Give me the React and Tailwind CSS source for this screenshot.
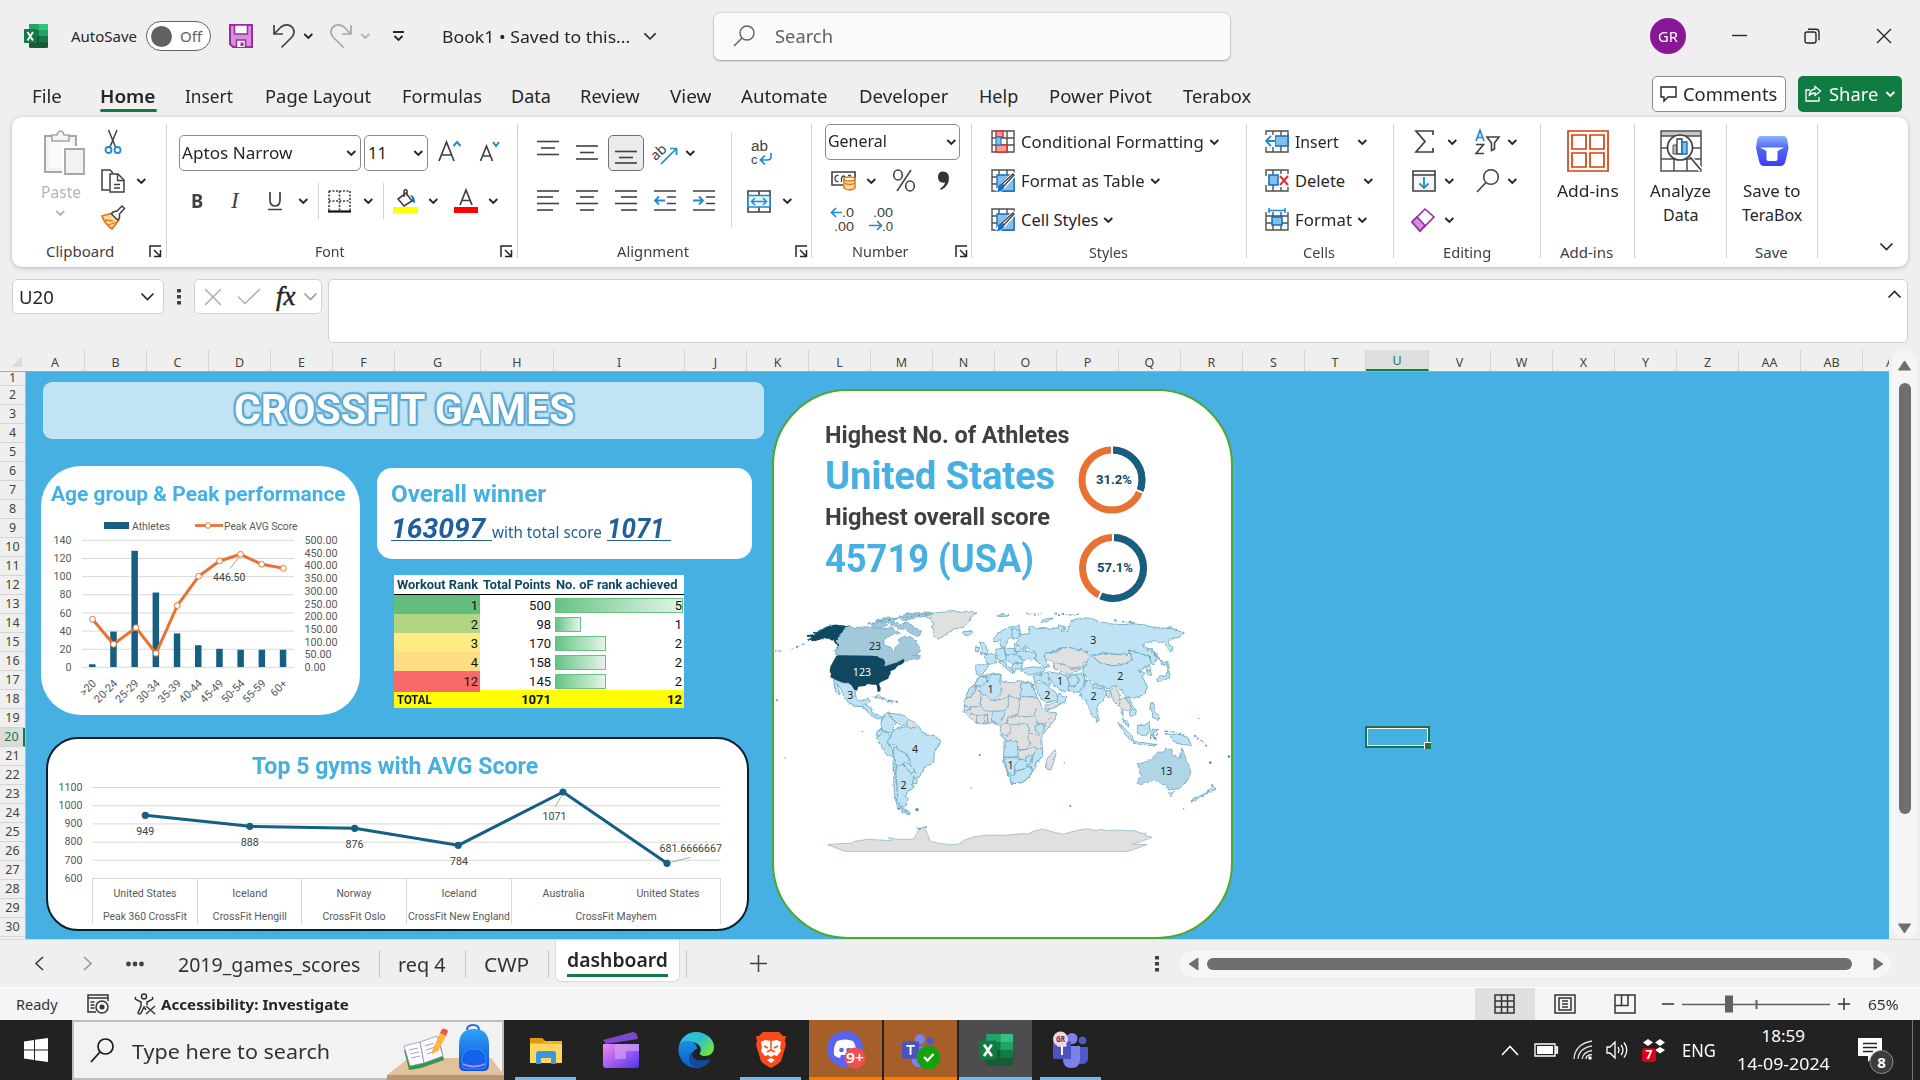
import React, { useLayoutEffect, useRef, useState } from "react";

/* Text set to a fixed measure, condensed or widened to fill it. */
function Fit({ w, className = "", children }) {
  const ref = useRef(null);
  const [k, setK] = useState(1);
  useLayoutEffect(() => {
    setK(w / ref.current.offsetWidth);
  }, [w]);
  return (
    <span className={"inline-flex shrink-0 " + className} style={{ width: w }}>
      <span ref={ref} className="inline-block origin-left whitespace-pre" style={{ transform: `scaleX(${k})` }}>
        {children}
      </span>
    </span>
  );
}

const Svg = ({ w, h, vb, className = "", children }) => (
  <svg width={w} height={h} viewBox={vb || `0 0 ${w} ${h}`} fill="none" className={"block shrink-0 overflow-visible " + className}>
    {children}
  </svg>
);

const Chev = ({ className = "", c = "#262626", w = 10, s = 1.9 }) => (
  <Svg w={w} h={w * 0.6} vb="0.7 0 10 6" className={className}>
    <path d="M1 1 5 5 9 1" stroke={c} strokeWidth={s * (10 / w)} />
  </Svg>
);

const ExcelLogo = ({ s }) => (
  <Svg w={s} h={s} vb="0 0 24 24">
    <rect x="5" y="0" width="19" height="24" rx="1.2" fill="#185c37" />
    <path d="M6 0h9v6H5V1q0-1 1-1z" fill="#21a366" />
    <path d="M15 0h8q1 0 1 1v5h-9z" fill="#33c481" />
    <path d="M5 6h10v6H5z" fill="#107c41" />
    <path d="M15 6h9v6h-9z" fill="#21a366" />
    <path d="M15 12h9v6h-9z" fill="#107c41" />
    <rect x="0" y="5" width="12.500" height="14" rx="1" fill="#107c41" />
    <path d="M3.500 8 9 16.500M9 8 3.500 16.500" stroke="#fff" strokeWidth="1.900" />
  </Svg>
);

function TitleBar() {
  return (
    <div className="flex h-[72px] items-center pl-6 text-[#262626]">
      <ExcelLogo s={24} />
      <Fit w={66} className="ml-[23px] text-[15px]">AutoSave</Fit>
      <div className="ml-[9px] flex h-[30px] w-[65px] shrink-0 items-center rounded-full border border-[#616161] bg-white pl-1">
        <span className="h-[21px] w-[21px] rounded-full bg-[#616161]" />
        <Fit w={22} className="ml-2 text-[15px] text-[#616161]">Off</Fit>
      </div>
      <Svg w={24} h={24} className="ml-[18px]">
        <path d="M1 1h22v22H4l-3-3z" fill="#d58fdc" stroke="#9a2ba0" strokeWidth="2" />
        <path d="M5.500 1h13v9h-13zM7.500 23v-7h9v7" fill="#fafafa" stroke="#9a2ba0" strokeWidth="1.500" />
        <path d="M11.500 18.500h3V22h-3z" fill="#9a2ba0" />
      </Svg>
      <Svg w={22} h={24} className="ml-5">
        <path d="M1 1v9h9M1.500 9.500 8 3C11.500 0 17 0 19.500 3.500 22 7 21 10.500 19 13L8.500 23.500" stroke="#404040" strokeWidth="1.700" />
      </Svg>
      <Chev className="ml-[9px]" />
      <Svg w={22} h={24} className="ml-4">
        <path d="M21 1v9h-9M20.500 9.500 14 3C10.500 0 5 0 2.500 3.500 0 7 1 10.500 3 13l10.500 10.500" stroke="#a6a6a6" strokeWidth="1.700" />
      </Svg>
      <Chev className="ml-[9px]" c="#b4b4b4" />
      <Svg w={11} h={10} className="ml-[22px]">
        <path d="M0 1h11M1.500 5l4 4 4-4" stroke="#262626" strokeWidth="1.800" />
      </Svg>
      <Fit w={188} className="ml-[38px] pt-px text-[17px]">Book1 • Saved to this...</Fit>
      <Chev className="ml-[14px]" w={14} s={1.6} />
      <div className="ml-[56px] flex h-[47px] w-[516px] shrink-0 items-center rounded-md bg-[#fafafa] shadow-[0_0_2px_#b0b0b0,0_1px_2px_#a0a0a0]">
        <Svg w={22} h={22} className="ml-[19px]">
          <circle cx="14" cy="8" r="7" stroke="#616161" strokeWidth="1.400" />
          <path d="M9 13 1 21" stroke="#616161" strokeWidth="1.500" />
        </Svg>
        <Fit w={58} className="ml-[20px] pt-px text-[18px] text-[#616161]">Search</Fit>
      </div>
      <div className="ml-[420px] flex h-9 w-9 shrink-0 items-center justify-center rounded-full bg-[#881798] text-white">
        <Fit w={20} className="text-[14px]">GR</Fit>
      </div>
      <Svg w={16} h={16} className="ml-[46px]"><path d="M0 7.500h15" stroke="#262626" strokeWidth="1.400" /></Svg>
      <Svg w={16} h={16} className="ml-[56px]">
        <rect x="1" y="4" width="11" height="11" rx="2" stroke="#262626" strokeWidth="1.400" />
        <path d="M4 1.200h8q3 0 3 3v8" stroke="#262626" strokeWidth="1.400" />
      </Svg>
      <Svg w={16} h={16} className="ml-[56px]"><path d="M1 1l14 14M15 1 1 15" stroke="#262626" strokeWidth="1.400" /></Svg>
    </div>
  );
}

function MenuTabs() {
  const f = "text-[18px]";
  return (
    <div className="flex h-[45px] items-center pt-[3px] pl-8 text-[#262626]">
      <Fit w={30} className={f}>File</Fit>
      <div className="relative ml-[38px] flex">
        <Fit w={56} className="text-[18px] font-semibold">Home</Fit>
        <span className="absolute -bottom-[2px] left-0 h-[3px] w-[57px] rounded bg-[#107c41]" />
      </div>
      <Fit w={48} className={f + " ml-[29px]"}>Insert</Fit>
      <Fit w={106} className={f + " ml-[32px]"}>Page Layout</Fit>
      <Fit w={80} className={f + " ml-[31px]"}>Formulas</Fit>
      <Fit w={40} className={f + " ml-[29px]"}>Data</Fit>
      <Fit w={60} className={f + " ml-[29px]"}>Review</Fit>
      <Fit w={41} className={f + " ml-[30px]"}>View</Fit>
      <Fit w={87} className={f + " ml-[30px]"}>Automate</Fit>
      <Fit w={89} className={f + " ml-[31px]"}>Developer</Fit>
      <Fit w={39} className={f + " ml-[31px]"}>Help</Fit>
      <Fit w={103} className={f + " ml-[31px]"}>Power Pivot</Fit>
      <Fit w={68} className={f + " ml-[31px]"}>Terabox</Fit>
      <div className="-mt-[5px] ml-[401px] flex h-9 w-[134px] shrink-0 items-center rounded-[5px] border border-[#8a8a8a] bg-white">
        <Svg w={17} h={16} className="ml-[7px]">
          <path d="M1 1h15v10H8l-4 4v-4H1z" stroke="#262626" strokeWidth="1.400" />
        </Svg>
        <Fit w={94} className={f + " ml-[6px] pt-[2px]"}>Comments</Fit>
      </div>
      <div className="-mt-[5px] ml-3 flex h-9 w-[104px] shrink-0 items-center rounded-[5px] bg-[#107c41] text-white">
        <Svg w={17} h={17} className="ml-[7px]">
          <path d="M5 5H1v11h13v-4" stroke="#fff" strokeWidth="1.300" />
          <path d="M10 1.500 15.500 6 10 10.500V8Q6 8 4 11 5 4.500 10 4z" stroke="#fff" strokeWidth="1.300" />
        </Svg>
        <Fit w={49} className={f + " ml-[7px] pt-[2px]"}>Share</Fit>
        <Chev className="ml-2" c="#fff" />
      </div>
    </div>
  );
}

const Launcher = ({ className }) => (
  <Svg w={13} h={13} className={className}>
    <path d="M1 12V1h11M5 5l6 6M11.500 5v6.500H5" stroke="#262626" strokeWidth="1.500" />
  </Svg>
);

const Lines = ({ rows, className = "" }) => (
  <Svg w={22} h={22} className={className}>
    {rows.map(([x, y, l], i) => (
      <path key={i} d={`M${x} ${y}h${l}`} stroke="#404040" strokeWidth="1.600" />
    ))}
  </Svg>
);

const Group = ({ className, label, children }) => (
  <div className={"mt-[7px] flex h-[134px] shrink-0 flex-col border-r border-[#d1d1d1] " + className}>
    <div className="h-[114px] shrink-0">{children}</div>
    <div className="mt-[3px] flex h-5 shrink-0 items-center text-[15px] text-[#404040]">{label}</div>
  </div>
);

const Row3 = ({ children }) => <div className="flex h-[39px] items-center">{children}</div>;
const Row2 = ({ children }) => <div className="flex h-12 items-center">{children}</div>;

const GridIcon = ({ kind }) => (
  <Svg w={24} h={23}>
    <path d="M1 1h22v21H1z M1 8h22 M1 15h22 M8 1v21 M16 1v21" stroke="#505050" strokeWidth="1.400" fill="#fff" />
    {kind === "cond" && (
      <g>
        <path d="M5 1h7v6H5zM5 15h11v7H5z" fill="#ff9c9c" stroke="#d92c2c" strokeWidth="1.500" />
        <path d="M5 7h5v8H5z" fill="#83beec" stroke="#1170bf" />
      </g>
    )}
    {kind === "brush" && (
      <g>
        <path d="M6 6h17v16H6z" fill="#83beec" stroke="#1170bf" strokeWidth="1.300" />
        <path d="M24 4 11 18l-5 5" stroke="#fff" strokeWidth="5.500" />
        <path d="M23 6 13 17l-2-2L22 5z" fill="#fff" stroke="#404040" strokeWidth="1.300" />
        <path d="M11 15q3 1 2 4-2 4-8 4 3-2 2-5 1-3 4-3z" fill="#1170bf" />
      </g>
    )}
    {kind === "insert" && (
      <g>
        <path d="M10 6h13v10H10z" fill="#83beec" stroke="#1170bf" strokeWidth="1.500" />
        <path d="M0 5h10v12H0z" fill="#fff" />
        <path d="M11 11H1M6 6l-5 5 5 5" stroke="#1e8bcd" strokeWidth="1.800" />
      </g>
    )}
    {kind === "delete" && (
      <g>
        <path d="M12 5h12v13H12zM0 7h3v9H0z" fill="#fff" />
        <path d="M4 6h9v10H4z" fill="#83beec" stroke="#1170bf" strokeWidth="1.500" />
        <path d="M15 7l8 9M23 7l-8 9" stroke="#e03030" strokeWidth="2" />
      </g>
    )}
    {kind === "format" && (
      <g>
        <path d="M0 0h24v4H0z" fill="#fff" />
        <path d="M4 0v5M20 0v5M4 2.500h16" stroke="#1e8bcd" strokeWidth="1.500" />
        <path d="M7 9h10v8H7z" fill="#83beec" stroke="#1170bf" strokeWidth="1.500" />
      </g>
    )}
  </Svg>
);

const BigTool = ({ icon, lines, ws }) => (
  <div className="flex flex-col items-center pt-[6px]">
    <div className="flex h-[49px] items-start">{icon}</div>
    {lines.map((t, i) => (
      <Fit key={t} w={ws[i]} className="h-6 items-center text-[16px] leading-6 text-[#262626]">{t}</Fit>
    ))}
  </div>
);

function Ribbon() {
  const t = "text-[16.5px] text-[#262626]";
  return (
    <div className="mx-3 flex h-[150px] rounded-[10px] bg-white shadow-[0_1px_4px_#b5b5b5]">
      <Group className="w-[155px]" label={<><Fit w={68} className="ml-[34px]">Clipboard</Fit><Launcher className="ml-[35px]" /></>}>
        <div className="flex">
          <div className="w-[89px] pt-[6px]">
            <Svg w={42} h={45} className="ml-8">
              <path d="M1 6h31v36H1z" fill="#f2f2f2" stroke="#a6a6a6" strokeWidth="2" />
              <path d="M5 9h23v29H5z" fill="#fafafa" />
              <path d="M8 11V5h5Q14 1 16.500 1T20 5h5v6z" fill="#f5f5f5" stroke="#a6a6a6" strokeWidth="1.600" />
              <path d="M20 18h21v26H20z" fill="#f2f2f2" stroke="#fff" strokeWidth="4" />
              <path d="M21 19h19v25H21z" fill="#f2f2f2" stroke="#a6a6a6" strokeWidth="1.800" />
            </Svg>
            <Fit w={40} className="mt-[5px] ml-[29px] text-[16px] text-[#b4b4b4]">Paste</Fit>
            <Chev className="mt-[6px] ml-11" c="#b4b4b4" />
          </div>
          <div className="-mt-[2px]">
            <Row3>
              <Svg w={24} h={24}>
                <path d="M7.500 0 14.500 17M16 0 9 17" stroke="#404040" strokeWidth="1.500" />
                <circle cx="7.500" cy="20" r="3" stroke="#1e8bcd" strokeWidth="1.800" />
                <circle cx="16.500" cy="20" r="3" stroke="#1e8bcd" strokeWidth="1.800" />
              </Svg>
            </Row3>
            <Row3>
              <Svg w={24} h={24}>
                <path d="M8 21H1V1h8l3 3" stroke="#404040" strokeWidth="1.500" />
                <path d="M9 5h8l6 6v12H9z" fill="#fff" stroke="#404040" strokeWidth="1.500" />
                <path d="M16.500 5v6.500H23M13 15.500h6M13 19h6" stroke="#404040" strokeWidth="1.300" />
              </Svg>
              <Chev className="ml-3" />
            </Row3>
            <Row3>
              <Svg w={24} h={24} className="-mt-[3px]">
                <path d="M1 10 12 7l6 7-7 9Q3 17 1 10z" fill="#fbd9a6" stroke="#e07a10" strokeWidth="1.700" />
                <path d="M4 14l8 1M7 19l9-3" stroke="#e07a10" strokeWidth="1.300" />
                <path d="M12 6l4-1 5-5 2.500 2.500-5 5.500v4l-2 2-6-6z" fill="#fff" stroke="#404040" strokeWidth="1.500" />
              </Svg>
            </Row3>
          </div>
        </div>
      </Group>

      <Group className="w-[351px]" label={<><Fit w={30} className="ml-[148px]">Font</Fit><Launcher className="ml-[155px]" /></>}>
        <div className="pt-[5px]">
          <Row2>
            <div className="ml-3 flex h-9 w-[182px] items-center rounded-[5px] border border-[#8a8a8a]">
              <Fit w={111} className={t + " ml-[2px] pt-px"}>Aptos Narrow</Fit>
              <Chev className="ml-[54px]" />
            </div>
            <div className="ml-[3px] flex h-9 w-16 items-center rounded-[5px] border border-[#8a8a8a]">
              <Fit w={19} className={t + " ml-[3px] pt-px"}>11</Fit>
              <Chev className="ml-[27px]" />
            </div>
            <Svg w={24} h={24} className="-mt-1 ml-[10px]">
              <path d="M1 22 8.500 3 16 22M3.500 16h10" stroke="#404040" strokeWidth="1.700" />
              <path d="M15.500 7l3.500-4 3.500 4" stroke="#1e8bcd" strokeWidth="2" />
            </Svg>
            <Svg w={22} h={24} className="-mt-1 ml-[17px]">
              <path d="M1.500 22 7.500 7 13.500 22M3.500 17h8" stroke="#404040" strokeWidth="1.700" />
              <path d="M14 3l3 4 3-4" stroke="#1e8bcd" strokeWidth="2" />
            </Svg>
          </Row2>
          <Row2>
            <Fit w={12} className="ml-6 text-[20px] font-bold text-[#404040]">B</Fit>
            <span className="ml-[28px] w-[10px] font-['Liberation_Serif'] text-[23px] text-[#404040] italic">I</span>
            <Svg w={14} h={20} className="ml-[27px]">
              <path d="M2 1v8q0 6 5 6t5-6V1M0 18.500h14" stroke="#404040" strokeWidth="1.700" />
            </Svg>
            <Chev className="ml-[17px]" />
            <span className="ml-[9px] h-9 w-px bg-[#d1d1d1]" />
            <Svg w={23} h={23} className="ml-[9px]">
              <path d="M1 1h21v20M1 1v20M11.500 1v20M1 11h21" stroke="#404040" strokeWidth="1.600" strokeDasharray="2 1.500" />
              <path d="M0 21.500h23" stroke="#111" strokeWidth="2.200" />
            </Svg>
            <Chev className="ml-[13px]" />
            <span className="ml-[9px] h-9 w-px bg-[#d1d1d1]" />
            <Svg w={25} h={24} className="ml-[9px]">
              <path d="M5 10 13 4l6 8-8 5z M11 8V2q2-3 3 0v5" stroke="#404040" strokeWidth="1.600" />
              <path d="M17 6q5 0 5 8-4-1-3-5z" fill="#1170bf" />
              <path d="M0 18h25v6H0z" fill="#ffff00" />
            </Svg>
            <Chev className="ml-[11px]" />
            <Svg w={24} h={24} className="ml-[15px]">
              <path d="M6 16 12 1l6 15M8 11.500h8" stroke="#404040" strokeWidth="1.700" />
              <path d="M0 18h24v6H0z" fill="#ff0000" />
            </Svg>
            <Chev className="ml-[11px]" />
          </Row2>
        </div>
      </Group>

      <Group className="w-[294px]" label={<><Fit w={72} className="ml-[99px]">Alignment</Fit><Launcher className="ml-[106px]" /></>}>
        <div className="flex pt-[5px]">
          <div className="w-[213px]">
            <Row2>
              <Lines className="ml-[19px]" rows={[[0, -0.5, 22], [4, 6, 14], [0, 12.500, 22]]} />
              <Lines className="ml-[17px]" rows={[[0, 4, 22], [4, 10.500, 14], [0, 17, 22]]} />
              <div className="ml-[10px] flex h-9 w-9 items-center justify-center rounded-[5px] border border-[#707070] bg-[#ebebeb]">
                <Lines rows={[[0, 9.500, 22], [4, 15.500, 14], [0, 21, 22]]} />
              </div>
              <Svg w={25} h={24} className="ml-[9px]">
                <text x="-3" y="14" transform="rotate(-42 8 10)" fontSize="14" fill="#404040">ab</text>
                <path d="M8 23 23 8M17 7.500h6.500V14" stroke="#1e8bcd" strokeWidth="1.700" />
              </Svg>
              <Chev className="ml-2" />
            </Row2>
            <Row2>
              <Lines className="ml-[19px]" rows={[[0, 1, 22], [0, 7, 16], [0, 13.500, 22], [0, 20, 16]]} />
              <Lines className="ml-[17px]" rows={[[0, 1, 22], [4, 7, 14], [0, 13.500, 22], [4, 20, 14]]} />
              <Lines className="ml-[17px]" rows={[[0, 1, 22], [6, 7, 16], [0, 13.500, 22], [6, 20, 16]]} />
              <Svg w={22} h={22} className="ml-[17px]">
                <path d="M0 1h22M13 7h9M13 13.500h9M0 20h22" stroke="#404040" strokeWidth="1.600" />
                <path d="M11 10.500H1M5 6.500l-4 4 4 4" stroke="#1e8bcd" strokeWidth="1.800" />
              </Svg>
              <Svg w={22} h={22} className="ml-[17px]">
                <path d="M0 1h22M13 7h9M13 13.500h9M0 20h22" stroke="#404040" strokeWidth="1.600" />
                <path d="M0 10.500h10M6 6.500l4 4-4 4" stroke="#1e8bcd" strokeWidth="1.800" />
              </Svg>
            </Row2>
          </div>
          <div className="mt-1 h-[94px] w-px bg-[#d1d1d1]" />
          <div>
            <Row2>
              <Svg w={22} h={26} className="ml-[19px]">
                <text x="0" y="11" fontSize="14" fill="#404040" fontFamily="Liberation Sans" textLength="17" lengthAdjust="spacingAndGlyphs">ab</text>
                <text x="0" y="24" fontSize="13" fill="#404040" fontFamily="Liberation Sans">c</text>
                <path d="M20 13v4q0 3-4 3H10M14 15.500l-4.500 4.500 4.500 4.500" stroke="#1e8bcd" strokeWidth="1.700" />
              </Svg>
            </Row2>
            <Row2>
              <Svg w={24} h={23} className="ml-[15px]">
                <path d="M1 1h22v21H1zM12 1v5M12 17v5" stroke="#404040" strokeWidth="1.600" />
                <path d="M1 5.500h22v11.500H1z" fill="#e9f4fc" stroke="#1e8bcd" strokeWidth="1.600" />
                <path d="M5 11.500h14M8 8l-3.500 3.500L8 15M16 8l3.500 3.500L16 15" stroke="#1e8bcd" strokeWidth="1.500" />
              </Svg>
              <Chev className="ml-3" />
            </Row2>
          </div>
        </div>
      </Group>

      <Group className="w-[160px]" label={<><Fit w={57} className="ml-10">Number</Fit><Launcher className="ml-[46px]" /></>}>
        <div className="-mt-[2px]">
          <Row3>
            <div className="ml-[13px] flex h-9 w-[135px] items-center rounded-[5px] border border-[#8a8a8a]">
              <Fit w={59} className={t + " ml-[2px]"}>General</Fit>
              <Chev className="ml-[60px]" />
            </div>
          </Row3>
          <Row3>
            <Svg w={25} h={21} className="ml-[19px]">
              <path d="M12 15H1V2h23v6" stroke="#404040" strokeWidth="1.600" />
              <path d="M7.500 5.500Q4 5 4 8.500t3.500 3M10.500 12V8q2-4 4 0M17 5.500h3" stroke="#404040" strokeWidth="1.300" />
              <path d="M13 9v9q6 4 11 0V9z" fill="#fbd9a6" stroke="#e07a10" strokeWidth="1.500" />
              <path d="M13 13q6 3 11 0" stroke="#e07a10" strokeWidth="1.300" />
              <ellipse cx="18.500" cy="9" rx="5.500" ry="2" fill="#fff" stroke="#e07a10" strokeWidth="1.500" />
            </Svg>
            <Chev className="ml-[11px]" />
            <Svg w={24} h={23} className="ml-[15px]">
              <ellipse cx="6" cy="6" rx="4.300" ry="5" stroke="#404040" strokeWidth="1.600" />
              <ellipse cx="18" cy="17" rx="4.300" ry="5" stroke="#404040" strokeWidth="1.600" />
              <path d="M19 1 5 22" stroke="#404040" strokeWidth="1.500" />
            </Svg>
            <Svg w={12} h={20} className="ml-[21px]">
              <path d="M6 0.500q6 0 6 6.500 0 8-8 12l-1-1.500q4.500-2.500 5-6-7 1-7-5.500Q1 .5 6 .5z" fill="#333" />
            </Svg>
          </Row3>
          <Row3>
            <Svg w={24} h={25} className="-mt-[3px] ml-[18px]">
              <text x="12" y="11" fontSize="13" fontFamily="Liberation Sans" fill="#404040" textLength="12" lengthAdjust="spacingAndGlyphs">.0</text>
              <text x="4" y="25" fontSize="13" fontFamily="Liberation Sans" fill="#404040" textLength="20" lengthAdjust="spacingAndGlyphs">.00</text>
              <path d="M12 6.500H1.500M6 2 1.500 6.500 6 11" stroke="#1e8bcd" strokeWidth="1.700" />
            </Svg>
            <Svg w={24} h={25} className="-mt-[3px] ml-[15px]">
              <text x="4" y="11" fontSize="13" fontFamily="Liberation Sans" fill="#404040" textLength="20" lengthAdjust="spacingAndGlyphs">.00</text>
              <text x="13" y="25" fontSize="13" fontFamily="Liberation Sans" fill="#404040" textLength="11" lengthAdjust="spacingAndGlyphs">.0</text>
              <path d="M0 19.500h12M8 15l4.500 4.500L8 24" stroke="#1e8bcd" strokeWidth="1.700" />
            </Svg>
          </Row3>
        </div>
      </Group>

      <Group className="w-[275px]" label={<Fit w={39} className="ml-[117px] pt-[2px]">Styles</Fit>}>
        <div className="-mt-[2px] pl-[19px]">
          <Row3><GridIcon kind="cond" /><Fit w={183} className={t + " ml-[6px] pt-px"}>Conditional Formatting</Fit><Chev className="ml-[6px]" /></Row3>
          <Row3><GridIcon kind="brush" /><Fit w={124} className={t + " ml-[6px] pt-px"}>Format as Table</Fit><Chev className="ml-[6px]" /></Row3>
          <Row3><GridIcon kind="brush" /><Fit w={77} className={t + " ml-[6px] pt-px"}>Cell Styles</Fit><Chev className="ml-[6px]" /></Row3>
        </div>
      </Group>

      <Group className="w-[147px]" label={<Fit w={32} className="ml-14 pt-[2px]">Cells</Fit>}>
        <div className="-mt-[2px] pl-[18px]">
          <Row3><GridIcon kind="insert" /><Fit w={44} className={t + " ml-[6px] pt-px"}>Insert</Fit><Chev className="ml-[19px]" /></Row3>
          <Row3><GridIcon kind="delete" /><Fit w={50} className={t + " ml-[6px] pt-px"}>Delete</Fit><Chev className="ml-[19px]" /></Row3>
          <Row3><GridIcon kind="format" /><Fit w={57} className={t + " ml-[6px] pt-px"}>Format</Fit><Chev className="ml-[6px]" /></Row3>
        </div>
      </Group>

      <Group className="w-[147px]" label={<Fit w={48} className="ml-[49px] pt-[2px]">Editing</Fit>}>
        <div className="-mt-[2px]">
          <Row3>
            <Svg w={19} h={23} className="ml-[21px]">
              <path d="M18 5V1H1l9 10.500L1 22h17v-4" stroke="#404040" strokeWidth="1.700" />
            </Svg>
            <Chev className="ml-[14px]" />
            <Svg w={25} h={26} className="ml-[17px]">
              <path d="M1 12 5 1.500 9 12M2.500 8.500h5" stroke="#1e8bcd" strokeWidth="1.700" />
              <path d="M1 15.500h7.500L1 24.500h8" stroke="#404040" strokeWidth="1.600" />
              <path d="M12 8h12l-4.500 6v6l-3 1.500V14z" stroke="#404040" strokeWidth="1.600" />
            </Svg>
            <Chev className="ml-[8px]" />
          </Row3>
          <Row3>
            <Svg w={24} h={22} className="ml-[18px]">
              <path d="M1 1h22v20H1zM1 5h22" stroke="#404040" strokeWidth="1.600" fill="#f7f7f7" />
              <path d="M12 7v11M7.500 13.500 12 18l4.500-4.500" stroke="#1e8bcd" strokeWidth="1.800" />
            </Svg>
            <Chev className="ml-[9px]" />
            <Svg w={24} h={24} className="ml-[21px]">
              <circle cx="15" cy="8" r="7.300" stroke="#404040" strokeWidth="1.500" />
              <path d="M10 13.500 1 23" stroke="#404040" strokeWidth="1.600" />
            </Svg>
            <Chev className="ml-[8px]" />
          </Row3>
          <Row3>
            <Svg w={24} h={24} className="ml-[17px]">
              <path d="M1 14 14 1l9 8L9 23z" fill="#fff" stroke="#9a2ba0" strokeWidth="1.600" />
              <path d="M1 14 6 9l8 8.500L9 23z" fill="#d58fdc" stroke="#9a2ba0" strokeWidth="1.600" />
            </Svg>
            <Chev className="ml-[10px]" />
          </Row3>
        </div>
      </Group>

      <Group className="w-[94px]" label={<Fit w={53} className="ml-[19px] pt-[2px]">Add-ins</Fit>}>
        <BigTool
          lines={["Add-ins"]}
          ws={[62]}
          icon={
            <Svg w={42} h={42}>
              <path d="M1 1h40v40H1zM5 5h14v14H5zM23 5h14v14H23zM5 23h14v14H5zM23 23h14v14H23z" stroke="#d4400e" strokeWidth="1.700" />
            </Svg>
          }
        />
      </Group>
      <Group className="w-[92px]" label={null}>
        <BigTool
          lines={["Analyze", "Data"]}
          ws={[61, 35]}
          icon={
            <Svg w={42} h={42}>
              <path d="M1 1h40v40H1z" fill="#fff" />
              <path d="M1 1h40v5H1z" fill="#c8c8c8" />
              <path d="M1 1h40v40H1zM1 6h40M1 18h40M1 29h40M14 29v12M27 29v12" stroke="#505050" strokeWidth="1.500" />
              <path d="M31 29 41 40" stroke="#fff" strokeWidth="5" />
              <circle cx="20" cy="17.500" r="12.500" fill="#fff" stroke="#404040" strokeWidth="1.700" />
              <path d="M30 27l11 13" stroke="#404040" strokeWidth="1.700" />
              <path d="M13 15h4v9h-4z" fill="#b8b8b8" stroke="#505050" />
              <path d="M17 9h5v15h-5z" fill="#fff" stroke="#404040" strokeWidth="1.400" />
              <path d="M22 12h5v12h-5z" fill="#83beec" stroke="#1170bf" strokeWidth="1.400" />
            </Svg>
          }
        />
      </Group>
      <Group className="w-[91px]" label={<Fit w={33} className="ml-7 pt-[2px]">Save</Fit>}>
        <BigTool
          lines={["Save to", "TeraBox"]}
          ws={[58, 60]}
          icon={
            <Svg w={34} h={34} className="mt-1">
              <defs>
                <linearGradient id="tera" x1="0" y1="0" x2="0" y2="1"><stop offset="0" stopColor="#8fb4ff" /><stop offset=".4" stopColor="#5068fa" /><stop offset="1" stopColor="#3b3cf5" /></linearGradient>
              </defs>
              <path d="M6 2h22q4 0 4.500 5l1 7-3 13q-1 5-5 5H9q-4 0-5-5L1 14l1-7q.5-5 4-5z" fill="url(#tera)" />
              <path d="M5 13.500h24l-6.500 3.500v8q0 2-2 2h-7q-2 0-2-2v-8z" fill="#fff" />
            </Svg>
          }
        />
      </Group>
      <Chev className="mt-[125px] ml-[62px]" w={15} s={1.6} />
    </div>
  );
}

function FormulaBar() {
  const box = "rounded-[5px] border border-[#d1d1d1] bg-white";
  return (
    <div className="mt-3 flex h-16 items-start pl-3">
      <div className={box + " flex h-[35px] w-[152px] items-center"}>
        <Fit w={35} className="ml-[6px] pt-px text-[18px] text-[#262626]">U20</Fit>
        <Chev className="ml-[87px]" w={15} s={1.6} />
      </div>
      <Svg w={4} h={16} className="mt-[10px] ml-[13px]">
        <path d="M0 0h4v3.500H0zM0 6h4v3.500H0zM0 12h4v3.500H0z" fill="#404040" />
      </Svg>
      <div className={box + " ml-[13px] flex h-[35px] w-[128px] items-center"}>
        <Svg w={18} h={18} className="ml-[9px]"><path d="M1 1l16 16M17 1 1 17" stroke="#b0b0b0" strokeWidth="1.600" /></Svg>
        <Svg w={24} h={17} className="ml-[15px]"><path d="M1 8.500l7 7L23 1" stroke="#b0b0b0" strokeWidth="1.600" /></Svg>
        <Fit w={20} className="-mt-[2px] ml-[15px] font-['Liberation_Serif'] text-[27px] leading-8 text-[#262626] italic [-webkit-text-stroke:0.5px_#262626]">fx</Fit>
        <Chev className="ml-[8px]" w={15} c="#9a9a9a" s={1.6} />
      </div>
      <div className={box + " ml-[6px] flex h-16 w-[1580px] justify-end"}>
        <Chev className="mt-[10px] mr-[6px] rotate-180" w={15} s={1.6} />
      </div>
    </div>
  );
}

const COLS = [
  ["A", 59], ["B", 62], ["C", 62], ["D", 62], ["E", 62], ["F", 62], ["G", 86], ["H", 73], ["I", 131], ["J", 62], ["K", 62],
  ["L", 62], ["M", 62], ["N", 62], ["O", 62], ["P", 62], ["Q", 62], ["R", 62], ["S", 62], ["T", 61], ["U", 63], ["V", 62],
  ["W", 62], ["X", 62], ["Y", 62], ["Z", 62], ["AA", 62], ["AB", 62],
];

const Txt = ({ x, y, w, s = 10.5, a = "start", b, c = "#595959", children }) => (
  <text x={x} y={y} fontSize={s} textAnchor={a} fontWeight={b ? 700 : 400} fill={c} textLength={w} lengthAdjust="spacingAndGlyphs">
    {children}
  </text>
);

function AgeCard() {
  const bars = [3, 39, 128, 82, 37, 24, 20, 19, 19, 19];
  const pts = [[92.5, 619.3], [113.5, 644.3], [136, 627.6], [156, 653.3], [177.3, 605.600], [198.6, 576.3], [219.6, 561], [240.5, 554.3], [261.6, 564.3], [283.5, 568.3]];
  const cats = [">20", "20-24", "25-29", "30-34", "35-39", "40-44", "45-49", "50-54", "55-59", "60+"];
  return (
    <div className="absolute top-[94px] left-[15px] h-[249px] w-[319px] rounded-[40px] bg-white font-['Roboto']">
      <Fit w={295} className="mt-[16px] ml-[10px] text-[20.5px] leading-[24px] font-bold text-[#45b0e1]">Age group &amp; Peak performance</Fit>
      <Svg w={319} h={207} vb="41 508 319 207">
        <rect x="104" y="522" width="25" height="7" fill="#156082" />
        <Txt x="132" y="529.500" w={38} s={11.5}>Athletes</Txt>
        <path d="M195 525.500h28" stroke="#e97132" strokeWidth="2.800" />
        <circle cx="208" cy="525.500" r="2.800" fill="#fff" stroke="#e97132" />
        <Txt x="224" y="529.500" w={73.5} s={11.5}>Peak AVG Score</Txt>
        {[0, 1, 2, 3, 4, 5, 6, 7].map((i) => (
          <g key={i}>
            <path d={`M82 ${667.4 - i * 18.15}h212`} stroke="#d9d9d9" />
            <Txt x="71.500" y={671 - i * 18.15} a="end" s={11} w={[6, 12, 12, 12, 12, 18, 18, 18][i]}>{i * 20}</Txt>
          </g>
        ))}
        {[0, 50, 100, 150, 200, 250, 300, 350, 400, 450, 500].map((v, i) => (
          <Txt key={v} x="304.500" y={671 - i * 12.7} s={11} w={i === 0 ? 21 : i === 1 ? 27 : 33}>{v + ".00"}</Txt>
        ))}
        {bars.map((v, i) => (
          <rect key={i} x={89 + i * 21.2} y={667 - v * 0.908} width="6.500" height={v * 0.908} fill="#156082" />
        ))}
        <polyline points={pts.map((p) => p.join(",")).join(" ")} stroke="#e97132" strokeWidth="3" strokeLinejoin="round" />
        <path d="M240 556 230 568.500" stroke="#a6a6a6" />
        {pts.map((p, i) => (
          <circle key={i} cx={p[0]} cy={p[1]} r="2.900" fill="#fff" stroke="#e97132" />
        ))}
        <Txt x="213" y="581" s={11.5} w={32.5} c="#404040">446.50</Txt>
        {cats.map((c, i) => (
          <text key={c} x={97 + i * 21.2} y="684" transform={`rotate(-45 ${97 + i * 21.2} 684)`} fontSize="11" textAnchor="end" fill="#595959">{c}</text>
        ))}
      </Svg>
    </div>
  );
}

function WinnerCard() {
  return (
    <div className="absolute top-[96px] left-[351px] h-[91px] w-[375px] rounded-[15px] bg-white pt-[10px] pl-[14px] font-['Roboto']">
      <Fit w={155} className="text-[24px] leading-8 font-bold text-[#45b0e1]">Overall winner</Fit>
      <div className="mt-[3px] flex items-baseline text-[#215f9a]">
        <span className="flex h-[28px] border-b border-[#215f9a]"><Fit w={101} className="pt-[2px] text-[28px] leading-[28px] font-bold italic">163097 </Fit></span>
        <Fit w={110} className="font-['Noto_Sans'] text-[15.5px] leading-[22px]">with total score</Fit>
        <span className="ml-[5px] flex h-[28px] border-b border-[#215f9a]"><Fit w={64} className="pt-[2px] text-[28px] leading-[28px] font-bold italic">1071 </Fit></span>
      </div>
    </div>
  );
}

function RankTable() {
  const rows = [
    ["1", "500", "5", "bg-[#63be7b]", "w-[128px]"],
    ["2", "98", "1", "bg-[#b1d580]", "w-[26px]"],
    ["3", "170", "2", "bg-[#ffeb84]", "w-[51px]"],
    ["4", "158", "2", "bg-[#ffdd82]", "w-[51px]"],
    ["12", "145", "2", "bg-[#f8696b]", "w-[51px]"],
  ];
  return (
    <div className="absolute top-[203px] left-[368px] w-[290px] bg-white font-['Roboto'] text-[13px] text-[#111]">
      <div className="flex h-[20px] items-center border-b border-black pt-px font-bold text-[#0f4761]">
        <Fit w={81} className="ml-[3px]">Workout Rank</Fit>
        <Fit w={68} className="ml-[5px]">Total Points</Fit>
        <Fit w={121} className="ml-[5px]">No. oF rank achieved</Fit>
      </div>
      {rows.map(([a, b, c, bg, bw]) => (
        <div key={a} className="grid h-[19px] grid-cols-[86px_73px_131px]">
          <span className={"flex items-center justify-end pt-px pr-[2px] " + bg}>{a}</span>
          <span className="flex items-center justify-end pt-px pr-[2px]">{b}</span>
          <span className="grid items-center">
            <span className={"col-start-1 row-start-1 ml-[2px] h-[15px] border border-[#63c384] bg-linear-to-r from-[#63c384] to-[#e3f4e9] " + bw} />
            <span className="col-start-1 row-start-1 pt-px pr-[2px] text-right">{c}</span>
          </span>
        </div>
      ))}
      <div className="grid h-[18px] grid-cols-[86px_73px_131px] items-center bg-[#ffff00] font-bold">
        <Fit w={35} className="ml-[3px]">TOTAL</Fit>
        <span className="pr-[2px] text-right">1071</span>
        <span className="pr-[2px] text-right">12</span>
      </div>
    </div>
  );
}

function GymCard() {
  const pts = [[145.3, 815.3], [249.8, 826.3], [354.7, 828.3], [458.2, 845.3], [563, 792], [667, 863.3]];
  const cat1 = [["United States", 145, 63], ["Iceland", 249.8, 35], ["Norway", 354, 35], ["Iceland", 459, 35], ["Australia", 563.500, 42], ["United States", 668, 63]];
  const cat2 = [["Peak 360 CrossFit", 145, 84], ["CrossFit Hengill", 249.8, 74], ["CrossFit Oslo", 354, 63], ["CrossFit New England", 459, 102], ["CrossFit Mayhem", 616, 81]];
  return (
    <div className="absolute top-[365px] left-[20px] h-[194px] w-[703px] rounded-[32px] border-2 border-[#04202e] bg-white font-['Roboto']">
      <Fit w={286} className="mt-[13px] ml-[204px] text-[24px] leading-[29px] font-bold text-[#45b0e1]">Top 5 gyms with AVG Score</Fit>
      <Svg w={699} h={147} vb="48 780 699 147" className="-mt-px">
        {[600, 700, 800, 900, 1000, 1100].map((v, i) => (
          <g key={v}>
            <path d={`M92.500 ${878.500 - i * 18.200}h628`} stroke="#d9d9d9" />
            <Txt x="82.500" y={881.800 - i * 18.200} a="end" s={11} w={v > 999 ? 24 : 18}>{v}</Txt>
          </g>
        ))}
        {[92.5, 197.5, 301.5, 406.5, 511.5, 720.5].map((x) => (
          <path key={x} d={`M${x} 878v46`} stroke="#d9d9d9" />
        ))}
        <polyline points={pts.map((p) => p.join(",")).join(" ")} stroke="#156082" strokeWidth="3" strokeLinejoin="round" />
        {pts.map((p, i) => (
          <circle key={i} cx={p[0]} cy={p[1]} r="3.600" fill="#156082" />
        ))}
        <path d="M562 795 555 807M670 862.500 690 857.500" stroke="#a6a6a6" />
        <Txt x="145.300" y="835" a="middle" w={18} s={11} c="#404040">949</Txt>
        <Txt x="249.800" y="846" a="middle" w={18} s={11} c="#404040">888</Txt>
        <Txt x="354.500" y="848" a="middle" w={18} s={11} c="#404040">876</Txt>
        <Txt x="459" y="865" a="middle" w={18} s={11} c="#404040">784</Txt>
        <Txt x="554.500" y="820" a="middle" w={24} s={11} c="#404040">1071</Txt>
        <Txt x="659.500" y="852" w={62.500} s={11} c="#404040">681.6666667</Txt>
        {cat1.map(([t, x, w], i) => <Txt key={i} x={x} y="897" a="middle" w={w} s={11}>{t}</Txt>)}
        {cat2.map(([t, x, w]) => <Txt key={t} x={x} y="920" a="middle" w={w} s={11}>{t}</Txt>)}
      </Svg>
    </div>
  );
}

const Donut = ({ r, pct, label }) => {
  const c = 2 * Math.PI * r;
  return (
    <Svg w={70} h={70} vb="-35 -35 70 70">
      <circle r={r} stroke="#e97132" strokeWidth="7" />
      <circle r={r} stroke="#156082" strokeWidth="7" strokeDasharray={`${c * pct} ${c}`} transform="rotate(-90)" />
      <path d="M0 -23V-36" stroke="#fff" strokeWidth="2" />
      <path d="M0 -23V-36" stroke="#fff" strokeWidth="2" transform={`rotate(${pct * 360})`} />
      <Txt x="2" y="4.300" a="middle" s={12} b w={36} c="#0f4761">{label}</Txt>
    </Svg>
  );
};

/* Country outlines by fill, on a 1410 × 900 map plane. */
const GRAY = [
  "M460,50 495,38 560,34 618,39 600,48 598,64 575,82 545,88 522,105 503,118 490,108 484,90 487,68 478,56Z",
  "M610,252 628,228 660,223 690,222 690,244 720,248 745,242 783,250 790,272 802,300 812,320 830,336 858,338 850,362 824,392 812,412 814,446 814,470 795,488 788,512 772,536 748,550 722,550 710,520 698,488 700,450 706,420 688,402 688,376 664,370 640,372 616,370 596,352 580,336 582,296 600,262Z",
  "M852,450 855,462 842,504 828,508 824,492 832,470Z",
  "M820,160 862,156 866,146 895,142 935,152 960,166 955,182 935,188 940,200 905,204 870,190 852,192 840,182 822,178Z",
  "M850,192 870,190 905,206 930,206 910,216 896,228 870,214 850,206Z",
  "M964,168 1000,160 1030,164 1072,164 1084,176 1066,190 1030,198 990,190Z",
  "M824,316 862,304 866,314 826,332Z",
  "M966,252 1004,264 1000,270 968,262Z",
  "M1004,272 1018,272 1016,292 1006,286Z",
  "M1018,270 1032,258 1044,280 1050,306 1042,318 1024,296Z",
  "M1044,296 1060,294 1080,310 1076,334 1056,328 1056,350 1048,320Z",
  "M412,358 438,370 434,384 412,384 405,372Z",
  "M308,290 325,287 345,297 325,295Z",
  "M1124,200 1136,194 1140,210 1126,214Z",
];
const ANTARCTICA =
  "M170,734 205,731 240,730 252,724 290,718 325,720 360,722 352,713 380,718 412,718 430,716 436,702 445,688 460,682 470,704 478,724 510,731 540,734 562,733 580,720 612,710 650,705 700,706 752,701 770,702 788,694 815,687 850,697 876,703 900,696 920,691 950,686 975,692 990,688 1010,692 1040,690 1070,692 1090,692 1112,700 1125,700 1122,706 1143,712 1112,724 1085,732 1128,734 1072,754 222,754Z";
const LIGHT = [
  "M188,238 200,242 228,248 244,258 252,272 255,292 264,302 282,302 292,292 297,304 280,318 262,320 232,308 218,285 208,264 198,250 206,280 202,284 190,258Z",
  "M272,320 282,312 300,325 308,342 330,350 340,346 338,356 318,356 300,346 288,330Z",
  "M348,300 368,303 366,309 350,307Z",
  "M338,346 352,336 362,342 362,356 380,368 368,378 362,396 350,398 330,386 330,366Z",
  "M352,340 372,342 398,346 412,358 405,372 392,378 380,368 362,356Z",
  "M318,392 330,386 338,396 325,408 316,406Z",
  "M325,408 338,396 350,398 360,410 348,428 362,440 368,474 340,456 316,412Z",
  "M362,396 378,386 405,380 434,384 440,374 452,396 472,404 498,412 506,428 490,458 488,490 460,500 456,514 440,536 426,528 432,516 418,498 416,476 404,460 380,448 372,436 352,432 348,425 360,410Z",
  "M368,440 380,448 404,460 416,480 402,486 395,496 378,494 368,474Z",
  "M396,492 405,484 418,494 432,514 420,520Z",
  "M424,532 440,540 436,552 424,550Z",
  "M378,496 395,494 420,520 428,530 424,552 430,562 410,574 404,590 410,600 404,620 388,622 380,600 378,560 374,520Z",
  "M366,474 376,492 374,520 378,560 380,600 388,622 412,632 418,644 400,640 380,624 370,580 368,530Z",
  "M660,225 690,222 686,240 692,282 665,303 625,272 628,258 650,246Z",
  "M610,256 625,230 650,228 650,246 628,258Z",
  "M580,296 600,262 618,260 612,272 600,290Z",
  "M748,248 783,252 796,290 750,290Z",
  "M580,318 595,320 598,332 580,332Z",
  "M638,346 650,342 650,368 638,370Z",
  "M664,334 704,332 698,350 684,370 664,366Z",
  "M792,372 820,374 818,392 808,404 794,392Z",
  "M700,420 738,424 742,470 698,472Z",
  "M698,472 744,474 732,500 730,526 712,522Z",
  "M730,500 745,474 764,482 770,498 755,508 734,514Z",
  "M762,470 784,466 782,492 768,494Z",
  "M794,446 816,446 814,470 794,490 790,512 780,512 782,492 786,468Z",
  "M710,520 730,526 734,514 755,508 775,498 782,514 775,534 748,550 722,550Z",
  "M614,194 644,194 650,200 636,222 616,222Z",
  "M640,166 662,160 676,172 672,190 648,194Z",
  "M626,126 638,128 652,150 648,160 626,162 634,148Z",
  "M614,142 626,142 622,156 612,154Z",
  "M664,120 684,98 710,82 745,78 748,96 742,110 726,118 720,108 712,120 702,142 690,140 686,122 668,126Z",
  "M724,86 744,90 746,108 730,118 722,108Z",
  "M674,148 700,144 704,170 720,178 700,184 676,176Z",
  "M700,144 730,146 734,164 704,166Z",
  "M730,134 760,138 764,152 734,156Z",
  "M734,156 764,152 796,160 790,180 762,178 740,174Z",
  "M704,166 734,164 756,178 756,190 726,190 708,182Z",
  "M726,190 756,190 750,206 734,208 728,222 716,206Z",
  "M682,184 700,184 712,200 728,216 720,218 712,210 694,196Z",
  "M752,206 790,200 818,206 815,218 770,222 752,216Z",
  "M576,95 604,94 606,100 590,106 574,101Z",
  "M738,130 750,104 776,100 772,86 782,80 800,86 840,86 860,84 862,74 886,82 870,92 890,94 896,64 925,54 955,54 985,64 1020,72 1065,74 1080,70 1110,74 1150,82 1200,86 1240,98 1225,112 1200,116 1194,126 1206,150 1198,156 1184,130 1160,124 1118,128 1120,142 1145,148 1155,176 1150,196 1140,190 1126,168 1105,160 1075,152 1072,164 1030,162 1000,158 960,166 935,150 895,142 866,144 862,152 820,160 822,178 836,200 818,200 792,180 796,158 765,140 750,146Z",
  "M935,212 950,180 964,170 990,190 1030,198 1066,190 1084,176 1072,150 1105,160 1138,170 1140,190 1122,204 1100,212 1124,218 1114,230 1130,260 1120,282 1090,294 1066,290 1050,270 1034,256 1010,264 980,252 952,240Z",
  "M925,276 940,260 944,240 958,248 968,262 1002,268 1006,284 996,300 980,316 976,350 966,354 952,322 944,300 930,290Z",
  "M890,232 912,222 925,240 914,258 892,258Z",
  "M912,222 940,222 942,250 922,280 898,276 892,258 914,258 925,240Z",
  "M832,216 862,220 888,228 892,258 896,276 868,272 848,254 836,236Z",
  "M806,222 832,216 838,256 822,250 806,238Z",
  "M790,226 812,222 806,240 790,248Z",
  "M788,252 812,246 838,262 856,280 862,300 826,308 812,296Z",
  "M862,300 862,282 888,290 880,306 864,314Z",
  "M1062,292 1076,292 1078,310 1096,332 1084,350 1074,340 1086,330Z",
  "M1054,354 1070,366 1074,378 1062,372Z",
  "M1040,368 1060,384 1084,408 1084,424 1066,408Z",
  "M1086,424 1130,430 1160,434 1130,437 1090,430Z",
  "M1098,380 1134,368 1136,392 1122,408 1100,400Z",
  "M1140,392 1160,388 1146,400 1156,418 1144,404 1138,418Z",
  "M1138,308 1150,312 1148,330 1166,350 1164,362 1148,352 1140,330Z",
  "M1182,400 1202,404 1222,402 1250,412 1262,436 1240,434 1216,430 1206,416Z",
  "M1156,240 1164,228 1186,226 1192,208 1184,186 1194,196 1194,230 1176,238 1164,246Z",
  "M1168,180 1192,188 1176,196Z",
  "M1142,146 1160,166 1170,182 1158,174Z",
  "M1128,214 1138,212 1142,226 1132,230Z",
  "M976,346 984,352 984,362 976,364Z",
  "M1192,580 1210,578 1198,592Z",
  "M1322,552 1334,566 1322,576 1308,576 1322,564Z",
  "M1308,578 1284,594 1258,608 1262,600Z",
  "M816,58 846,54 830,64 810,68Z",
  "M680,44 714,44 700,50 680,48Z",
];
const CANADA = [
  "M226,79 262,82 290,80 310,86 335,86 360,84 372,90 390,98 370,104 352,108 337,120 340,135 360,142 368,155 374,140 388,130 384,118 398,108 420,112 432,122 440,136 452,148 440,162 425,164 452,172 440,178 420,178 400,184 398,176 375,188 345,197 338,180 320,169 195,168 188,150 196,140 188,118Z",
  "M300,70 330,66 350,74 330,84 304,82Z",
  "M384,74 410,68 430,82 452,96 444,108 420,100 400,88 380,86Z",
  "M318,62 345,54 380,56 372,64 345,68Z",
  "M380,50 420,40 470,36 492,40 455,50 420,56 400,64Z",
  "M360,66 380,68 376,80 358,78Z",
];
const BORDERS = [
  "M582,296 600,290 612,272 630,274 628,320 596,320",
  "M665,303 700,296 712,286 748,300 748,248M712,286 712,320 704,332M748,290H796M748,300 746,316 738,344",
  "M628,320 640,332 664,334M616,370 618,346 638,346M596,342 618,346",
  "M738,344 712,352 704,370 690,376M738,344 760,350 790,348 796,324M790,348 800,370 824,370 842,352",
  "M704,370 722,374 768,370 776,390 770,410 778,430 766,448 742,450M776,400 808,408M742,450 766,448 790,440 794,446",
  "M690,400 712,410 722,374M738,424 742,450",
];

const Num = ({ x, y, c = "#262626", children }) => (
  <text x={x} y={y + 11} fontSize="32" textAnchor="middle" fill={c} fontFamily="Noto Sans">{children}</text>
);

const WorldMap = () => (
  <Svg w={480} h={256} vb="-15 15 1440 768">
    <defs>
      <filter id="coast" x="-5%" y="-5%" width="110%" height="110%">
        <feTurbulence type="fractalNoise" baseFrequency="0.070" numOctaves="2" seed="4" />
        <feDisplacementMap in="SourceGraphic" scale="11" xChannelSelector="R" yChannelSelector="G" />
      </filter>
    </defs>
    <path d={ANTARCTICA} fill="#e0e0e0" stroke="#9bbccb" strokeWidth="2.500" strokeLinejoin="round" />
    <g filter="url(#coast)" stroke="#76a9c0" strokeWidth="2.500" strokeLinejoin="round">
      <g fill="#e0e0e0">{GRAY.map((d) => <path key={d} d={d} />)}</g>
      {BORDERS.map((d) => <path key={d} d={d} />)}
      <g fill="#bfe3f4" stroke="#68a3bd">{LIGHT.map((d) => <path key={d} d={d} />)}</g>
      <g fill="#a2c9da">{CANADA.map((d) => <path key={d} d={d} />)}</g>
      <path fill="#b0d5e7" d="M1102,492 1130,484 1150,470 1160,456 1180,456 1184,446 1204,448 1202,462 1218,472 1228,474 1232,444 1242,466 1246,484 1260,504 1258,524 1240,552 1226,566 1190,570 1184,550 1172,552 1160,540 1134,544 1112,554 1098,550 1108,530Z" />
      <path fill="#104862" stroke="#104862" d="M226,79 190,75 165,82 148,92 126,97 135,103 108,107 125,112 108,121 135,122 160,113 188,118 200,142 196,120Z" />
      <path d="M100,131 58,150M30,153 0,156M330,62 480,40M290,72 340,60M765,42H812M850,42 925,46M1030,62 1080,68M1194,80 1238,98M1130,148 1160,172M330,296 380,308M1180,390 1240,404M1270,408 1312,440M1160,400 1150,420M380,622 415,642M440,688 470,676" stroke="#5b97b3" strokeWidth="3.500" strokeDasharray="8 6 3 5" />
    </g>
    <path fill="#104862" d="M196,168 204,166 300,167 320,169 326,174 338,177 343,188 340,198 356,194 375,188 388,182 398,176 400,186 394,192 380,198 372,208 358,214 359,222 354,228 352,236 330,246 324,252 329,264 328,274 320,276 318,262 316,254 304,254 290,252 282,258 262,260 258,272 250,270 242,256 232,248 220,249 200,242 188,236 178,232 180,222 176,214 178,200 190,178Z" />
    <g fill="#4d93b5">
      <circle cx="18" cy="301" r="3" /><circle cx="274" cy="394" r="2" /><circle cx="626" cy="465" r="3" />
      <circle cx="600" cy="564" r="2" /><circle cx="898" cy="618" r="3" /><circle cx="880" cy="488" r="2" />
      <circle cx="1318" cy="488" r="4" /><circle cx="1374" cy="470" r="4" /><circle cx="1283" cy="355" r="2" />
      <circle cx="438" cy="629" r="5" /><circle cx="42" cy="474" r="2" /><circle cx="1238" cy="626" r="2" />
    </g>
    <Num x={312} y={138}>23</Num>
    <Num x={273} y={216} c="#fff">123</Num>
    <Num x={238} y={286}>3</Num>
    <Num x={432} y={447}>4</Num>
    <Num x={398} y={556}>2</Num>
    <Num x={659} y={268}>1</Num>
    <Num x={829} y={286}>2</Num>
    <Num x={867} y={243}>1</Num>
    <Num x={967} y={120}>3</Num>
    <Num x={1048} y={229}>2</Num>
    <Num x={968} y={288}>2</Num>
    <Num x={719} y={496}>1</Num>
    <Num x={1186} y={513}>13</Num>
  </Svg>
);

function MapCard() {
  return (
    <div className="absolute top-[17px] left-[746px] h-[550px] w-[461px] rounded-[76px] border-2 border-[#4ea72e] bg-white font-['Roboto'] font-bold">
      <div className="flex h-[212px]">
        <div className="mt-[28px] ml-[51px] flex w-[246px] flex-col">
          <Fit w={245} className="text-[24px] leading-[32px] text-[#404040]">Highest No. of Athletes</Fit>
          <Fit w={230} className="text-[38px] leading-[50px] text-[#45b0e1]">United States</Fit>
          <Fit w={225} className="text-[24px] leading-[32px] text-[#404040]">Highest overall score</Fit>
          <Fit w={209} className="pt-px text-[38px] leading-[50px] text-[#45b0e1]">45719 (USA)</Fit>
        </div>
        <div className="mt-[54px] ml-[6px] flex flex-col gap-[18px]">
          <Donut r={30} pct={0.312} label="31.2%" />
          <div className="ml-px"><Donut r={30.5} pct={0.571} label="57.1%" /></div>
        </div>
      </div>
      <div className="mt-[2px] -ml-[8px] font-normal"><WorldMap /></div>
    </div>
  );
}

function Sheet() {
  return (
    <div className="mt-[7px] flex h-[589px]">
      <div className="w-[1889px]">
        <div className="flex h-[22px] overflow-hidden border-b border-[#a8a8a8] text-[12.5px] text-[#444]">
          <div className="flex w-[26px] shrink-0 items-end justify-end pr-1 pb-1">
            <Svg w={11} h={11}><path d="M11 0v11H0z" fill="#dcdcdc" /></Svg>
          </div>
          {COLS.map(([n, w]) => (
            <div
              key={n}
              style={{ width: w }}
              className={"flex shrink-0 items-end justify-center border-r border-[#d4d4d4] pt-1 leading-[17px] " + (n === "U" ? "border-b-2 border-b-[#107c41] bg-[#dfdfdf] leading-[15px] text-[#107c41]" : "")}
            >
              {n}
            </div>
          ))}
          <div className="flex shrink-0 items-end pl-[23px] leading-[17px]">AC</div>
        </div>
        <div className="flex h-[567px]">
          <div className="flex w-[26px] shrink-0 flex-col overflow-hidden border-r border-[#b8b8b8] text-[12.5px] text-[#444]">
            {Array.from({ length: 30 }, (_, i) => (
              <div
                key={i}
                className={
                  "flex shrink-0 items-center justify-center border-b border-[#d4d4d4] leading-none " +
                  (i === 0 ? "h-[14px] " : "h-[19px] pt-px ") +
                  (i === 19 ? "border-r-2 border-r-[#107c41] bg-[#dcdcdc] text-[#107c41]" : "")
                }
              >
                {i + 1}
              </div>
            ))}
          </div>
          {/* Floating shapes and charts placed freely over the cells */}
          <div className="relative h-[567px] w-[1863px] overflow-hidden bg-[#45b0e1]">
            <div className="absolute top-[10px] left-[17px] flex h-[57px] w-[721px] items-center rounded-[9px] bg-[#c1e4f5] font-['Roboto']">
              <Fit w={341} className="-mt-[2px] ml-[191px] text-[43px] leading-none font-bold text-white [text-shadow:0_0_3px_#4b9bc9,0_0_2px_#5aa5d0,1px_1px_2px_#5ba8d2,-1px_-1px_2px_#5ba8d2,1px_-1px_2px_#5ba8d2,-1px_1px_2px_#5ba8d2,2px_2px_1px_#7dbbdc,-2px_-2px_1px_#7dbbdc,2px_-2px_1px_#7dbbdc,-2px_2px_1px_#7dbbdc]">
                CROSSFIT GAMES
              </Fit>
            </div>
            <AgeCard />
            <WinnerCard />
            <RankTable />
            <GymCard />
            <MapCard />
            <div className="absolute top-[354px] left-[1339px] h-[22px] w-[65px] border-2 border-[#1d7444] shadow-[inset_0_0_0_1px_#fff]">
              <span className="absolute -right-[3px] -bottom-[3px] h-[7px] w-[7px] border-t border-l border-white bg-[#1d7444]" />
            </div>
          </div>
        </div>
      </div>
      <div className="ml-[3px] flex w-[25px] flex-col items-center rounded-full bg-[#f5f5f5] pt-[10px]">
        <Svg w={13} h={11}><path d="M6.500 1 12.500 10H.5z" fill="#6e6e6e" stroke="#6e6e6e" strokeLinejoin="round" /></Svg>
        <span className="mt-[12px] h-[431px] w-3 rounded-full bg-[#6e6e6e]" />
        <Svg w={13} h={11} className="mt-[109px]"><path d="M6.500 10 12.500 1H.5z" fill="#6e6e6e" stroke="#6e6e6e" strokeLinejoin="round" /></Svg>
      </div>
    </div>
  );
}

function SheetTabs() {
  const div = "h-7 w-px shrink-0 bg-[#c8c8c8]";
  return (
    <div className="flex h-12 items-center border-t border-[#d8d8d8] pl-[34px] text-[19px] text-[#333]">
      <Svg w={10} h={15}><path d="M9 1 2 7.500 9 14" stroke="#404040" strokeWidth="1.700" /></Svg>
      <Svg w={10} h={15} className="ml-[39px]"><path d="M1 1l7 6.500L1 14" stroke="#9a9a9a" strokeWidth="1.700" /></Svg>
      <Svg w={18} h={6} className="ml-[33px]">
        <circle cx="2.500" cy="3" r="2.400" fill="#404040" /><circle cx="9" cy="3" r="2.400" fill="#404040" /><circle cx="15.500" cy="3" r="2.400" fill="#404040" />
      </Svg>
      <Fit w={182} className="ml-[34px] pt-1">2019_games_scores</Fit>
      <span className={div + " ml-[19px]"} />
      <Fit w={48} className="ml-[18px] pt-1">req 4</Fit>
      <span className={div + " ml-[19px]"} />
      <Fit w={45} className="ml-[18px] pt-1">CWP</Fit>
      <span className={div + " ml-[19px]"} />
      <div className="ml-[6px] flex h-[42px] w-[125px] shrink-0 flex-col items-center self-start rounded-b-md border border-t-0 border-[#dcdcdc] bg-white pt-[7px]">
        <Fit w={101} className="leading-[27px] font-semibold text-[#262626]">dashboard</Fit>
        <span className="h-[3px] w-[101px] bg-[#107c41]" />
      </div>
      <span className={div + " ml-[6px]"} />
      <Svg w={17} h={17} className="ml-[63px]"><path d="M8.500 0v17M0 8.500h17" stroke="#404040" strokeWidth="1.500" /></Svg>
      <Svg w={4} h={16} className="ml-[388px]">
        <path d="M0 0h4v3.500H0zM0 6h4v3.500H0zM0 12h4v3.500H0z" fill="#404040" />
      </Svg>
      <div className="ml-[21px] flex h-[26px] w-[711px] shrink-0 items-center rounded-full bg-[#f6f6f6]">
        <Svg w={11} h={14} className="ml-2"><path d="M10 1v12L1 7z" fill="#6e6e6e" stroke="#6e6e6e" strokeLinejoin="round" /></Svg>
        <span className="ml-2 h-3 w-[645px] rounded-full bg-[#6e6e6e]" />
        <Svg w={11} h={14} className="ml-[21px]"><path d="M1 1v12l9-6z" fill="#6e6e6e" stroke="#6e6e6e" strokeLinejoin="round" /></Svg>
      </div>
    </div>
  );
}

function StatusBar() {
  const s = { stroke: "#333", strokeWidth: 1.5 };
  return (
    <div className="flex h-[33px] items-center border-t border-white bg-[#f5f5f5] pl-4 text-[14.5px] text-[#333]">
      <Fit w={42} className="pt-px">Ready</Fit>
      <Svg w={22} h={20} className="ml-[29px]">
        <path d="M9 18H1V1h20v6M1 4h20M3.500 8h4M3.500 11h4M3.500 14h4" {...s} />
        <circle cx="15" cy="13" r="6" {...s} fill="#f5f5f5" /><circle cx="15" cy="13" r="2.500" fill="#333" />
      </Svg>
      <Svg w={22} h={22} className="ml-[25px]">
        <circle cx="10" cy="3.500" r="2.500" {...s} />
        <path d="M2 4q-2 2 1 3l4 2v4l-3 7q1 2 3 0l3-6 2 3M18 4q2 2-1 3l-4 2v3M12 13l9 8M21 13l-9 8" {...s} />
      </Svg>
      <Fit w={188} className="ml-[5px] pt-px font-bold text-[#262626]">Accessibility: Investigate</Fit>
      <div className="ml-[1126px] flex h-full w-[60px] shrink-0 items-center justify-center bg-[#dfdfdf]">
        <Svg w={20} h={20} className="-ml-[2px]"><path d="M1 1h19v18H1zM1 7h19M1 13h19M7.500 1v18M13.500 1v18" {...s} /></Svg>
      </div>
      <Svg w={22} h={20} className="ml-[19px]"><path d="M1 1h20v18H1zM5 4h12v12H5zM8 7h6M8 10h6M8 13h6" {...s} /></Svg>
      <Svg w={22} h={20} className="ml-[38px]"><path d="M1 1h20v18H1zM1 11.500h13V1M7.500 1v10" {...s} /></Svg>
      <Svg w={12} h={12} className="ml-[26px]"><path d="M0 6h12" {...s} /></Svg>
      <Svg w={149} h={18} className="ml-[8px]">
        <path d="M0 9.500h148" stroke="#616161" strokeWidth="1.500" />
        <path d="M43 .5h8v17h-8zM73.500 5h2v9h-2z" fill="#616161" />
      </Svg>
      <Svg w={12} h={12} className="ml-[7px]"><path d="M0 6h12M6 0v12" {...s} /></Svg>
      <Fit w={31} className="ml-[18px] pt-px">65%</Fit>
    </div>
  );
}

const Task = ({ cell = "", bar = "", children }) => (
  <div className={"mr-[2px] flex h-[60px] w-[73px] shrink-0 flex-col items-center " + cell}>
    <div className="flex h-[57px] items-center pt-[3px]">{children}</div>
    <span className={"h-[3px] " + bar} />
  </div>
);

const TeamsIcon = () => (
  <g>
    <circle cx="29.500" cy="8.500" r="3.800" fill="#5059c9" />
    <path d="M24 15h11v11q0 6-6 6t-6-5z" fill="#5059c9" />
    <circle cx="19" cy="6.500" r="5.500" fill="#7b83eb" />
    <path d="M10 14h17v13q0 9-8.500 9T10 27z" fill="#7b83eb" />
    <rect x="0" y="9" width="18" height="18" rx="1.500" fill="#4b53bc" />
    <path d="M4.500 13.500h9M9 13.500V23" stroke="#fff" strokeWidth="2" />
  </g>
);

function Taskbar() {
  return (
    <div className="flex h-[60px] items-center bg-[#222222] text-white">
      <div className="flex w-[72px] shrink-0 justify-center">
        <Svg w={24} h={24}><path d="M0 3.500 10 2v9.500H0zM11 1.800 24 0v11.500H11zM0 12.500h10V22L0 20.500zM11 12.500h13V24l-13-1.800z" fill="#fff" /></Svg>
      </div>
      <div className="flex h-[60px] w-[432px] shrink-0 items-center border-2 border-[#bdbdbd] bg-[#f2f2f2]">
        <Svg w={24} h={25} className="ml-4">
          <circle cx="15.500" cy="8.500" r="7.500" stroke="#1a1a1a" strokeWidth="1.700" />
          <path d="M10 14 1 24" stroke="#1a1a1a" strokeWidth="1.800" />
        </Svg>
        <Fit w={198} className="ml-[18px] pt-[3px] text-[20px] text-[#333]">Type here to search</Fit>
        <Svg w={117} h={56} className="ml-[57px]">
          <defs>
            <linearGradient id="bag" x1="0" y1="0" x2="0" y2="1"><stop offset="0" stopColor="#2fa2fb" /><stop offset="1" stopColor="#0d4fd8" /></linearGradient>
          </defs>
          <path d="M22 36h82l13 17H0z" fill="#e2c29c" />
          <path d="M0 53h117v5H0z" fill="#b8956c" />
          <path d="M17 28 22 48 34 46 57 38 52 16z" fill="#2f9a4a" />
          <path d="M17 24 33 20 37 41 23 44z" fill="#fff" stroke="#8b7fb8" strokeWidth=".7" />
          <path d="M33 20 50 14 56 34 37 41z" fill="#faf7ff" stroke="#8b7fb8" strokeWidth=".7" />
          <path d="M22 28l9-2M23 32l9-2M24 36l9-2M38 24l9-3M39 28l9-3M40 32l9-3" stroke="#a9a2c8" />
          <path d="M45 29 53 11l6 3-8 15-6 3z" fill="#fcb63c" /><path d="M53 11l2-4q4-1 6 2l-2 5z" fill="#e9584a" />
          <path d="M80 8q0-5 6-5t6 5" stroke="#1c6fe0" strokeWidth="2" />
          <path d="M72 23q0-16 15-16t15 16v20q0 6-6 6H78q-6 0-6-6z" fill="url(#bag)" />
          <path d="M75 38q0-11 12-11t12 11v5q0 4-4 4H79q-4 0-4-4z" fill="#1560e8" stroke="#3f9bff" strokeWidth=".8" />
          <path d="M76 42q11 5 22 0" stroke="#b58cff" strokeWidth="1.800" />
        </Svg>
      </div>
      <div className="ml-[5px] flex">
        <Task bar="w-[61px] bg-[#76b9ed]">
          <Svg w={32} h={27}>
            <path d="M0 1h12l3 3h17v22H0z" fill="#f0b429" /><path d="M0 7h32v19H0z" fill="#ffd75e" />
            <path d="M0 1h12l3 3-3 2H0z" fill="#dd9a10" />
            <path d="M6 27V17q0-3 3-3h14q3 0 3 3v10h-5v-6H11v6z" fill="#3a96dd" />
          </Svg>
        </Task>
        <Task>
          <Svg w={36} h={36}>
            <defs><linearGradient id="clip" x1="0" y1="0" x2="1" y2="1"><stop offset="0" stopColor="#f08af0" /><stop offset=".5" stopColor="#a95cf2" /><stop offset="1" stopColor="#4a34f0" /></linearGradient></defs>
            <path d="M0 8 30 0q4 0 5 7L3 12z" fill="#7d47cf" />
            <path d="M0 12h36v21q0 3-3 3H3q-3 0-3-3z" fill="url(#clip)" />
            <path d="M12 12h24v7H23v8H12z" fill="#c9a0f5" opacity=".7" />
          </Svg>
        </Task>
        <Task>
          <Svg w={36} h={36}>
            <defs>
              <linearGradient id="ed1" x1="0" y1="0" x2="1" y2=".6"><stop offset="0" stopColor="#33b8f0" /><stop offset=".6" stopColor="#2bc3c8" /><stop offset="1" stopColor="#6fe04a" /></linearGradient>
              <linearGradient id="ed2" x1="0" y1="0" x2="0" y2="1"><stop offset="0" stopColor="#1b8fe6" /><stop offset="1" stopColor="#0b5fc0" /></linearGradient>
            </defs>
            <path d="M1 14C3 5 10 0 18 0c10 0 18 7 18 15 0 6-4 9-9 9-4 0-6-2-5-3 2-3 1-10-8-11C8 9 3 11 1 14z" fill="url(#ed1)" />
            <path d="M1 13C4 8 10 8 14 10c5 2 5 6 5 7-4 1-6 5-5 9 1 5 5 9 9 10C9 38-2 27 1 13z" fill="url(#ed2)" />
            <path d="M14 20q-1 12 19 7-5 9-14 9-8-3-8-10 0-4 3-6z" fill="#114a9a" />
          </Svg>
        </Task>
        <Task bar="w-[61px] bg-[#76b9ed]">
          <Svg w={30} h={36}>
            <path d="M7 0h16l4 4 3 0-1 5 1 4-5 16q-2 3-10 7-8-4-10-7L0 13l1-4L0 4h3z" fill="#fb4a1b" />
            <path d="M5 10 9 8l6 1 6-1 4 2-1 6 1 3-4 5-3-1-3 2-3-2-3 1-4-5 1-3z" fill="#fff" />
            <path d="M15 9v9l-4 2M15 18l4 2M8 14l4 2M22 14l-4 2M15 25v3" stroke="#fb4a1b" strokeWidth="1.500" />
            <path d="M11 28l4-2 4 2-4 3z" fill="#fff" />
          </Svg>
        </Task>
        <Task cell="bg-[#a65f28]" bar="w-full bg-[#ff7a00]">
          <Svg w={40} h={40} vb="-2 0 40 40">
            <circle cx="17" cy="19" r="18" fill="#5865f2" />
            <path d="M9 11q8-3 16 0 4 6 3 14-3 3-6 3l-1-3h-8l-1 3q-3 0-6-3-1-8 3-14z" fill="#fff" />
            <circle cx="13.500" cy="20" r="2.300" fill="#5865f2" /><circle cx="20.500" cy="20" r="2.300" fill="#5865f2" />
            <circle cx="27" cy="28" r="10.500" fill="#f04f4f" />
            <text x="27" y="33" fontSize="14" fontWeight="600" textAnchor="middle" fill="#fff" textLength="18" lengthAdjust="spacingAndGlyphs">9+</text>
          </Svg>
        </Task>
        <Task cell="bg-[#a65f28]" bar="w-full bg-[#ff7a00]">
          <Svg w={40} h={40}>
            <g transform="translate(1 3) scale(.95)"><TeamsIcon /></g>
            <circle cx="27.500" cy="27.500" r="11.800" fill="#13a10e" />
            <path d="M23 27l3.500 3.500 6-6.500" stroke="#fff" strokeWidth="2.300" />
          </Svg>
        </Task>
        <Task cell="bg-[#4d4d4d]" bar="w-full bg-[#76b9ed]"><Svg w={34} h={32}><g transform="scale(1.42 1.33)"><ExcelLogo s={24} /></g></Svg></Task>
        <Task bar="w-[61px] bg-[#76b9ed]">
          <Svg w={36} h={38}>
            <g transform="translate(0 1)"><TeamsIcon /></g>
            <circle cx="7.500" cy="8" r="7.500" fill="#f7d3df" />
            <text x="7.500" y="11" fontSize="8" fontWeight="700" textAnchor="middle" fill="#6b1f3d" textLength="9" lengthAdjust="spacingAndGlyphs">GR</text>
          </Svg>
        </Task>
      </div>
      <Svg w={18} h={11} className="ml-[392px]"><path d="M1 10l8-8.500L17 10" stroke="#fff" strokeWidth="1.600" /></Svg>
      <Svg w={24} h={14} className="ml-[15px]"><path d="M1 1h20v12H1zM22 4h1.500v6H22z" stroke="#fff" strokeWidth="1.300" /><path d="M3 3h16v8H3z" fill="#fff" /></Svg>
      <Svg w={20} h={20} className="ml-[15px]">
        <path d="M1 19Q2 4 19 1M5 19Q6 8 19 6M9 19q1-7 10-8.500M13 19q0-4 6-4.500" stroke="#ddd" strokeWidth="1.300" />
        <circle cx="17" cy="18" r="1.800" fill="#fff" />
      </Svg>
      <Svg w={22} h={18} className="ml-[13px]">
        <path d="M1 6h3l5-5v16l-5-5H1zM12 6q2 3 0 6M15 4q4 5 0 10M18 1.500q5.500 7.500 0 15" stroke="#fff" strokeWidth="1.300" />
      </Svg>
      <Svg w={24} h={24} className="ml-[14px]">
        <path d="M6 1l5 3.500L6 8 1 4.500zM18 1l5 3.500L18 8l-5-3.500zM18 9l5 3-5 3.500-5-3.500z" fill="#fff" />
        <rect x="0" y="10" width="14" height="14" rx="3" fill="#d9001b" />
        <text x="7" y="21" fontSize="12" fontWeight="700" textAnchor="middle" fill="#fff">7</text>
      </Svg>
      <Fit w={34} className="ml-4 text-[17.5px]">ENG</Fit>
      <div className="ml-[21px] flex w-[92px] shrink-0 flex-col items-center text-[17px]">
        <Fit w={43} className="h-7 leading-7">18:59</Fit>
        <Fit w={93} className="h-7 leading-7">14-09-2024</Fit>
      </div>
      <Svg w={36} h={38} className="mt-3 ml-[29px]">
        <path d="M0 1h24v18H15l-5 6v-6H0z" fill="#fff" />
        <path d="M5 6.500h14M5 10.500h14M5 14.500h10" stroke="#222" strokeWidth="1.300" />
        <circle cx="23.500" cy="25" r="11.500" fill="#3c3c3c" stroke="#8a8a8a" />
        <text x="23.500" y="30.500" fontSize="15" fontWeight="700" textAnchor="middle" fill="#fff">8</text>
      </Svg>
      <span className="ml-[18px] h-[60px] w-px bg-[#777]" />
    </div>
  );
}

export default function App() {
  return (
    <div className="h-[1080px] w-[1920px] overflow-hidden bg-[#efefef] font-['Noto_Sans','Open_Sans',sans-serif] leading-normal">
      <TitleBar />
      <MenuTabs />
      <Ribbon />
      <FormulaBar />
      <Sheet />
      <SheetTabs />
      <StatusBar />
      <Taskbar />
    </div>
  );
}
